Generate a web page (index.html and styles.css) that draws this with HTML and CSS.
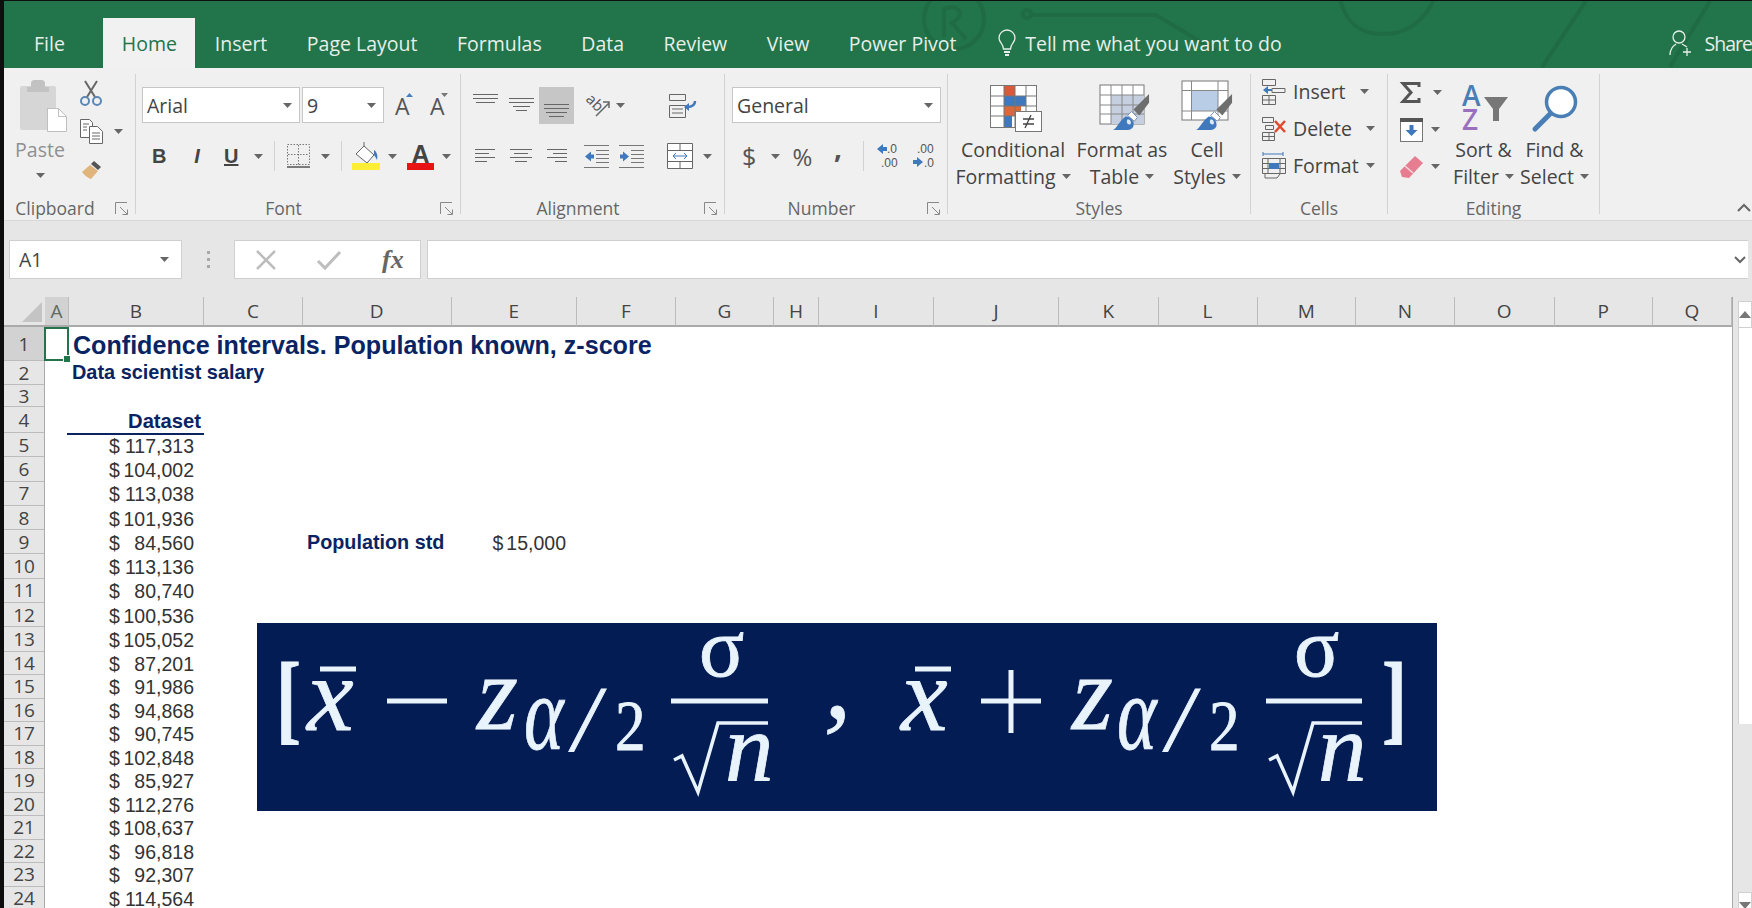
FILE: index.html
```html
<!DOCTYPE html>
<html>
	<head>
		<meta charset="UTF-8">
		<title>Confidence intervals</title>
		<link rel="stylesheet" href="styles.css">
	</head>
	<body>
		<svg class="defs" width="0" height="0">
			<symbol id="caret" viewBox="0 0 9 5"><path d="M0 0h9L4.500 5z" fill="#666"/></symbol>
			<symbol id="launch" viewBox="0 0 13 13"><path d="M.5 12V.5H12M5 5l7 7M7.500 12.500h5v-5" fill="none" stroke="#888"/></symbol>
			<symbol id="brush" viewBox="0 0 40 40"><path d="M38 1v9L28 23l-6-6z" fill="#6e6e6e"/><path d="M20 19l6 6-3 4-7-6z" fill="#fff" stroke="#7b8fb5"/><path d="M14 24c5 0 9 5 8 10-1 3-4 4-8 4H1c4-2 7-10 13-14z" fill="#3f78bd"/><path d="M16 27c3 0 4 3 3 5-3 1-5-2-3-5z" fill="#dfe9f5"/></symbol>
		</svg>
		<div class="app">
			<div class="tabs">
				<svg class="tabs-art" width="1748" height="67" viewBox="0 0 1748 67" fill="none" stroke="#1f6c44" stroke-width="4">
					<circle cx="950" cy="18" r="30"/>
					<path d="M940 36V8c12-6 24 4 8 14l14 16"/>
					<circle cx="1023" cy="13" r="4"/>
					<path d="M1027 14h125l60 36"/>
					<path d="M1336-2c6 26 22 35 44 35s40-12 50-35"/>
					<path d="M1538 66l44-66M1666 66l40-66"/>
				</svg>
				<div class="tab tab-file">File</div>
				<div class="tab tab-active">Home</div>
				<div class="tab">Insert</div>
				<div class="tab">Page Layout</div>
				<div class="tab">Formulas</div>
				<div class="tab">Data</div>
				<div class="tab">Review</div>
				<div class="tab">View</div>
				<div class="tab">Power Pivot</div>
				<div class="tell">
					<svg width="18" height="26" viewBox="0 0 18 26" fill="none" stroke="#e6efe9" stroke-width="1.300"><path d="M5.500 19c0-5-4.500-6.500-4.500-11a8 8 0 0 1 16 0c0 4.500-4.500 6-4.500 11z"/><path d="M6 22h6M7 25h4" stroke-width="2"/></svg>
					<span>Tell me what you want to do</span>
				</div>
				<div class="share">
					<svg width="24" height="26" viewBox="0 0 24 26" fill="none" stroke="#e6efe9" stroke-width="1.300"><circle cx="10" cy="7" r="6"/><path d="M1 25c0-6 3-9 6-11M13 14l5 3M18 18v8M14 22h8"/></svg>
					<span>Share</span>
				</div>
			</div>

			<div class="ribbon">
				<div class="group g-clip">
					<div class="body row-body">
						<div class="big paste">
							<div class="big-icon">
								<svg width="47" height="52" viewBox="0 0 47 52"><rect x="0" y="6" width="36" height="44" rx="2" fill="#d6d6d6"/><path d="M11 7V3c0-2 2-3 3-3h8c1 0 3 1 3 3v4h4v5H7V7z" fill="#c2c2c2"/><path d="M27.500 28.500h11l8 8v15h-19z" fill="#fff" stroke="#bfbfbf"/><path d="M38.500 28.500v8h8" fill="none" stroke="#bfbfbf"/></svg>
							</div>
							<div class="big-text muted">Paste</div>
							<svg class="paste-caret" width="9" height="5"><use href="#caret"/></svg>
						</div>
						<div class="clip-small">
							<div class="clip-row">
								<svg width="22" height="25" viewBox="0 0 22 25" fill="none"><path d="M5 0l10 16M17 0L7 16" stroke="#666" stroke-width="2"/><circle cx="5" cy="20" r="4" stroke="#5c87b5" stroke-width="2"/><circle cx="17" cy="20" r="4" stroke="#5c87b5" stroke-width="2"/></svg>
							</div>
							<div class="clip-row">
								<svg width="23" height="25" viewBox="0 0 23 25" fill="#fff" stroke="#666"><path d="M.5.500h9l3 3v15H.5z"/><path d="M9.500 7.500h8l5 5v12h-13z"/><path d="M3 5h6M3 8h4M3 11h4M12 14h8M12 17h8M12 20h8" fill="none"/></svg>
								<svg class="m11" width="9" height="5"><use href="#caret"/></svg>
							</div>
							<div class="clip-row">
								<svg width="23" height="20" viewBox="0 0 23 20"><path d="M14 2l7 6-3 3-7-6z" fill="#555"/><path d="M10 6l8 6-7 8c-3-1-7-4-9-7z" fill="#e0b57b"/></svg>
							</div>
						</div>
					</div>
					<div class="label"><span>Clipboard</span><svg class="launch" width="13" height="13"><use href="#launch"/></svg></div>
				</div>

				<div class="group g-font">
					<div class="body">
						<div class="ctl-row">
							<div class="combo combo-font m6"><span>Arial</span><svg width="9" height="5"><use href="#caret"/></svg></div>
							<div class="combo combo-size m2"><span>9</span><svg width="9" height="5"><use href="#caret"/></svg></div>
							<svg class="m11" width="19" height="32" viewBox="0 0 19 32"><text class="ic-a" x="0" y="26">A</text><path d="M11 8h7l-3.500-4z" fill="#4a7fb5"/></svg>
							<svg class="m16" width="19" height="32" viewBox="0 0 19 32"><text class="ic-a" x="0" y="26">A</text><path d="M11 4h7l-3.500 4z" fill="#777"/></svg>
						</div>
						<div class="ctl-row row-2">
							<span class="b-btn m16">B</span>
							<span class="i-btn m25">I</span>
							<span class="u-btn m21">U</span>
							<svg class="m16" width="9" height="5"><use href="#caret"/></svg>
							<i class="vline m11"></i>
							<svg class="m12" width="23" height="24" viewBox="0 0 23 24" fill="none" stroke="#777" stroke-dasharray="1.500 1.500"><path d="M.5.500h22v20H.5zM11.500 1v20M1 10.500h21"/><path d="M0 23h23" stroke="#555" stroke-width="1.500" stroke-dasharray="none"/></svg>
							<svg class="m11" width="9" height="5"><use href="#caret"/></svg>
							<i class="vline m11"></i>
							<svg class="m10" width="28" height="28" viewBox="0 0 28 28"><path d="M4 12L12 4l10 9-7 8z" fill="#fff" stroke="#666"/><path d="M12 5V0" stroke="#666"/><path d="M22 8c3 2 4 6 3 10-1-2-2-4-3-5z" fill="#3f78bd"/><rect y="21" width="28" height="7" fill="#ffee33"/></svg>
							<svg class="m8" width="9" height="5"><use href="#caret"/></svg>
							<svg class="m10" width="27" height="27" viewBox="0 0 27 27"><text class="ic-color" x="4.500" y="20">A</text><rect y="20" width="27" height="7" fill="#e81313"/></svg>
							<svg class="m8" width="9" height="5"><use href="#caret"/></svg>
						</div>
					</div>
					<div class="label"><span>Font</span><svg class="launch" width="13" height="13"><use href="#launch"/></svg></div>
				</div>

				<div class="group g-align">
					<div class="body">
						<div class="ctl-row">
							<svg class="m12 up14" width="25" height="9" viewBox="0 0 25 9" stroke="#666"><path d="M0 .5h25M0 4.500h25M3 8.500h19"/></svg>
							<svg class="m11" width="25" height="14" viewBox="0 0 25 14" stroke="#666"><path d="M0 .5h25M0 4.500h25M4 8.500h17M7 12.500h11"/></svg>
							<div class="hot m5">
								<svg width="25" height="14" viewBox="0 0 25 14" stroke="#666"><path d="M0 .5h25M0 4.500h25M2 8.500h21M5 12.500h15"/></svg>
							</div>
							<svg class="m9" width="27" height="23" viewBox="0 0 27 23"><text class="ic-orient" transform="translate(2 6) rotate(45)">ab</text><path d="M13 22L26 9M20 8h6v6" fill="none" stroke="#666" stroke-width="1.500"/></svg>
							<svg class="m6" width="9" height="5"><use href="#caret"/></svg>
							<svg class="m44" width="27" height="25" viewBox="0 0 27 25" fill="none" stroke="#666"><path d="M.5 1.500h16v6H.5zM.5 12.500h16v12H.5zM3 16h11M3 20h11"/><path d="M26 8c0 4-3 6-8 6" stroke="#3f78bd" stroke-width="2.500"/><path d="M20 10l-5 4 5 4z" fill="#3f78bd" stroke="none"/></svg>
						</div>
						<div class="ctl-row row-2">
							<svg class="m14" width="20" height="14" viewBox="0 0 20 14" stroke="#666"><path d="M0 .5h20M0 4.500h14M0 8.500h20M0 12.500h12"/></svg>
							<svg class="m15" width="22" height="14" viewBox="0 0 22 14" stroke="#666"><path d="M0 .5h22M4 4.500h14M0 8.500h22M5 12.500h12"/></svg>
							<svg class="m15" width="20" height="14" viewBox="0 0 20 14" stroke="#666"><path d="M0 .5h20M6 4.500h14M0 8.500h20M8 12.500h12"/></svg>
							<svg class="m17" width="25" height="23" viewBox="0 0 25 23" fill="none" stroke="#777"><path d="M0 .5h25M12 5.500h13M12 9.500h13M12 13.500h13M12 17.500h13M0 22.500h25"/><path d="M1 11.500l6-5v3h3v4H7v3z" fill="#3f78bd" stroke="none"/></svg>
							<svg class="m10" width="25" height="23" viewBox="0 0 25 23" fill="none" stroke="#777"><path d="M0 .5h25M12 5.500h13M12 9.500h13M12 13.500h13M12 17.500h13M0 22.500h25"/><path d="M10 11.500l-6-5v3H1v4h3v3z" fill="#3f78bd" stroke="none"/></svg>
							<svg class="m23" width="26" height="26" viewBox="0 0 26 26" fill="#fff" stroke="#666"><path d="M.5.500h25v25H.5zM1 7.500h24M1 18.500h24M13 1v6M13 19v6"/><path d="M6 13h14M9 10l-3 3 3 3M17 10l3 3-3 3" fill="none" stroke="#3f78bd"/></svg>
							<svg class="m10" width="9" height="5"><use href="#caret"/></svg>
						</div>
					</div>
					<div class="label"><span>Alignment</span><svg class="launch" width="13" height="13"><use href="#launch"/></svg></div>
				</div>

				<div class="group g-number">
					<div class="body">
						<div class="ctl-row">
							<div class="combo combo-num m7"><span>General</span><svg width="9" height="5"><use href="#caret"/></svg></div>
						</div>
						<div class="ctl-row row-2">
							<span class="sym sym-dollar m17">$</span>
							<svg class="m15" width="9" height="5"><use href="#caret"/></svg>
							<span class="sym sym-pct m12">%</span>
							<span class="sym sym-comma m21">,</span>
							<i class="vline m21"></i>
							<svg class="m13" width="21" height="28" viewBox="0 0 21 28"><text class="ic-dec" x="10" y="11">.0</text><text class="ic-dec" x="4" y="25">.00</text><path d="M0 7l6-5v3h4v4H6v3z" fill="#3f78bd"/></svg>
							<svg class="m15" width="21" height="28" viewBox="0 0 21 28"><text class="ic-dec" x="4" y="11">.00</text><text class="ic-dec" x="11" y="25">.0</text><path d="M10 20l-6-5v3H0v4h4v3z" fill="#3f78bd"/></svg>
						</div>
					</div>
					<div class="label"><span>Number</span><svg class="launch" width="13" height="13"><use href="#launch"/></svg></div>
				</div>

				<div class="group g-styles">
					<div class="body row-body">
						<div class="big w-cf">
							<div class="big-icon nudge">
								<svg width="52" height="47" viewBox="0 0 52 47"><rect x=".5" y=".5" width="46" height="42" fill="#fff" stroke="#777"/><rect x="14" y="1" width="11" height="10" fill="#d9593a"/><rect x="14" y="11" width="22" height="10" fill="#3f78bd"/><rect x="14" y="21" width="17" height="10" fill="#d9693a"/><rect x="14" y="31" width="8" height="11" fill="#3f78bd"/><path d="M1 11h46M1 21h46M1 31h46M14 1v42M25 1v42M36 1v42" stroke="#777" fill="none"/><rect x="25.500" y="26.500" width="26" height="20" fill="#fff" stroke="#777"/><path d="M33 34h11M33 39h11M41 30l-6 13" stroke="#444" stroke-width="1.300"/></svg>
							</div>
							<div class="big-text">Conditional</div>
							<div class="big-text">Formatting<svg class="m6" width="9" height="5"><use href="#caret"/></svg></div>
						</div>
						<div class="big w-ft">
							<div class="big-icon nudge">
								<svg width="52" height="48" viewBox="0 0 52 48"><rect x="1" y="1" width="44" height="39" fill="#fff" stroke="#777"/><rect x="12" y="11" width="33" height="29" fill="#c6cfe0"/><path d="M1 11h44M1 21h44M1 30h44M12 1v39M23 1v39M34 1v39" stroke="#888" fill="none"/><use href="#brush" x="13" y="9" width="39" height="39"/></svg>
							</div>
							<div class="big-text">Format as</div>
							<div class="big-text">Table<svg class="m6" width="9" height="5"><use href="#caret"/></svg></div>
						</div>
						<div class="big w-cs">
							<div class="big-icon">
								<svg width="53" height="52" viewBox="0 0 53 52"><rect x="1" y="1" width="46" height="39" fill="#fff" stroke="#777"/><rect x="11" y="11" width="26" height="20" fill="#b9cde6"/><path d="M1 10.500h46M1 31h46M10.500 1v39M37 1v39" stroke="#888" fill="none"/><use href="#brush" x="14" y="13" width="39" height="39"/></svg>
							</div>
							<div class="big-text">Cell</div>
							<div class="big-text">Styles<svg class="m6" width="9" height="5"><use href="#caret"/></svg></div>
						</div>
					</div>
					<div class="label center"><span>Styles</span></div>
				</div>

				<div class="group g-cells">
					<div class="body">
						<div class="cell-row">
							<svg width="24" height="26" viewBox="0 0 24 26" fill="none" stroke="#666"><path d="M.5.500h13v6H.5zM.5 16.500h13v9H.5zM7 17v8M1 21h12M10 9.500h13v4H10z"/><path d="M1 11l5-4v3h4v2H6v3z" fill="#3f78bd" stroke="none"/></svg>
							<span>Insert</span>
							<svg class="m14" width="9" height="5"><use href="#caret"/></svg>
						</div>
						<div class="cell-row">
							<svg width="24" height="24" viewBox="0 0 24 24" fill="none" stroke="#666"><path d="M.5.500h11v5H.5zM3.500 8.500h8v4h-8zM.5 15.500h12v8H.5zM7 16v7M1 19.500h11"/><path d="M13 4l10 11M23 4L13 15" stroke="#e0492c" stroke-width="2.500"/></svg>
							<span>Delete</span>
							<svg class="m14" width="9" height="5"><use href="#caret"/></svg>
						</div>
						<div class="cell-row">
							<svg width="24" height="27" viewBox="0 0 24 27" fill="none" stroke="#666"><path d="M1 2h20M1 0v4M21 0v4" stroke="#3f78bd"/><path d="M.5 6.500h23v15H.5zM6 7v14M18 7v14M1 11.500h22M1 16.500h22M3 22v4h12l3-4"/><rect x="7" y="11" width="10" height="6" fill="#3f78bd" stroke="none"/></svg>
							<span>Format</span>
							<svg class="m7" width="9" height="5"><use href="#caret"/></svg>
						</div>
					</div>
					<div class="label center"><span>Cells</span></div>
				</div>

				<div class="group g-edit">
					<div class="body row-body">
						<div class="edit-small">
							<div class="edit-row">
								<svg width="20" height="21" viewBox="0 0 20 21"><path d="M19 5V1.500H3l8 9-8 9h16V16" fill="none" stroke="#555" stroke-width="3"/></svg>
								<svg class="m13" width="9" height="5"><use href="#caret"/></svg>
							</div>
							<div class="edit-row">
								<svg width="23" height="24" viewBox="0 0 23 24"><rect x=".5" y=".5" width="22" height="23" fill="#fff" stroke="#777"/><rect width="23" height="4" fill="#555"/><path d="M11.500 18l-6-6h4V7h4v5h4z" fill="#3f78bd"/></svg>
								<svg class="m8" width="9" height="5"><use href="#caret"/></svg>
							</div>
							<div class="edit-row">
								<svg width="23" height="22" viewBox="0 0 23 22"><path d="M15 0l8 7-14 15-7-1-2-6z" fill="#e67d90"/><path d="M5 10l8 7" stroke="#f5d9de" stroke-width="1.500"/></svg>
								<svg class="m8" width="9" height="5"><use href="#caret"/></svg>
							</div>
						</div>
						<div class="big w-sort">
							<div class="big-icon">
								<svg width="50" height="47" viewBox="0 0 50 47"><text class="ic-az az-a" x="3" y="21">A</text><text class="ic-az az-z" x="3" y="45">Z</text><path d="M28 12h24L43 24v12h-6V24z" transform="translate(-3 0)" fill="#777"/></svg>
							</div>
							<div class="big-text">Sort &amp;</div>
							<div class="big-text">Filter<svg class="m6" width="9" height="5"><use href="#caret"/></svg></div>
						</div>
						<div class="big w-find">
							<div class="big-icon">
								<svg width="46" height="47" viewBox="0 0 46 47"><circle cx="29" cy="17" r="14.500" fill="#fff" stroke="#4a7fb5" stroke-width="3.500"/><path d="M18 29L3 44" stroke="#4a7fb5" stroke-width="5" stroke-linecap="round"/></svg>
							</div>
							<div class="big-text">Find &amp;</div>
							<div class="big-text">Select<svg class="m6" width="9" height="5"><use href="#caret"/></svg></div>
						</div>
					</div>
					<div class="label center"><span>Editing</span></div>
				</div>

				<svg class="collapse" width="14" height="9" viewBox="0 0 14 9" fill="none" stroke="#666" stroke-width="2"><path d="M1 8l6-6 6 6"/></svg>
			</div>

			<div class="fbar">
				<div class="namebox"><span>A1</span><svg width="9" height="5"><use href="#caret"/></svg></div>
				<div class="fdots"><i></i><i></i><i></i></div>
				<div class="fbtns">
					<svg width="20" height="20" viewBox="0 0 20 20" stroke="#bdbdbd" stroke-width="2.500"><path d="M1 1l18 18M19 1L1 19"/></svg>
					<svg width="24" height="20" viewBox="0 0 24 20" fill="none" stroke="#bdbdbd" stroke-width="3"><path d="M1 11l7 7L23 2"/></svg>
					<span class="fx">fx</span>
				</div>
				<div class="finput">
					<svg width="12" height="8" viewBox="0 0 12 8" fill="none" stroke="#666" stroke-width="2"><path d="M1 1l5 5 5-5"/></svg>
				</div>
			</div>

			<div class="sheet">
				<div class="grid">
					<div class="corner"><svg width="20" height="20" viewBox="0 0 20 20"><path d="M20 0v20H0z" fill="#c4c4c4"/></svg></div>
					<div class="ch ch-on">A</div><div class="ch">B</div><div class="ch">C</div><div class="ch">D</div><div class="ch">E</div><div class="ch">F</div><div class="ch">G</div><div class="ch">H</div><div class="ch">I</div><div class="ch">J</div><div class="ch">K</div><div class="ch">L</div><div class="ch">M</div><div class="ch">N</div><div class="ch">O</div><div class="ch">P</div><div class="ch">Q</div>

					<div class="rh rh-on">1</div><div class="a1"></div><div class="title">Confidence intervals. Population known, z-score</div>
					<div class="rh">2</div><div class="subtitle">Data scientist salary</div>
					<div class="rh">3</div>
					<div class="rh">4</div><div class="dataset">Dataset</div>
					<div class="rh">5</div><div class="money"><span>$</span><span>117,313</span></div>
					<div class="rh">6</div><div class="money"><span>$</span><span>104,002</span></div>
					<div class="rh">7</div><div class="money"><span>$</span><span>113,038</span></div>
					<div class="rh">8</div><div class="money"><span>$</span><span>101,936</span></div>
					<div class="rh">9</div><div class="money"><span>$</span><span>84,560</span></div><div class="std">Population std</div><div class="std-val"><span>$</span><span>15,000</span></div>
					<div class="rh">10</div><div class="money"><span>$</span><span>113,136</span></div>
					<div class="rh">11</div><div class="money"><span>$</span><span>80,740</span></div>
					<div class="rh">12</div><div class="money"><span>$</span><span>100,536</span></div>
					<div class="rh">13</div><div class="money"><span>$</span><span>105,052</span></div>
					<div class="rh">14</div><div class="money"><span>$</span><span>87,201</span></div>
					<div class="rh">15</div><div class="money"><span>$</span><span>91,986</span></div>
					<div class="rh">16</div><div class="money"><span>$</span><span>94,868</span></div>
					<div class="rh">17</div><div class="money"><span>$</span><span>90,745</span></div>
					<div class="rh">18</div><div class="money"><span>$</span><span>102,848</span></div>
					<div class="rh">19</div><div class="money"><span>$</span><span>85,927</span></div>
					<div class="rh">20</div><div class="money"><span>$</span><span>112,276</span></div>
					<div class="rh">21</div><div class="money"><span>$</span><span>108,637</span></div>
					<div class="rh">22</div><div class="money"><span>$</span><span>96,818</span></div>
					<div class="rh">23</div><div class="money"><span>$</span><span>92,307</span></div>
					<div class="rh">24</div><div class="money"><span>$</span><span>114,564</span></div>

					<svg class="picture" width="1180" height="188" viewBox="0 0 1180 188">
						<text class="fm fm-br" transform="translate(19 108) scale(.75 1)">[</text>
						<text class="fm fm-it" x="50" y="107">x</text>
						<path class="fm-line" d="M63 46h36"/>
						<path class="fm-line" d="M130 78h60"/>
						<text class="fm fm-it" x="220" y="106">z</text>
						<text class="fm fm-it" transform="translate(267 126) scale(.72 1)">α</text>
						<text class="fm fm-sl" x="316" y="127">/</text>
						<text class="fm fm-2" transform="translate(358 127) scale(.85 1)">2</text>
						<path class="fm-line" d="M414 78h97"/>
						<text class="fm fm-sig" x="442" y="53">σ</text>
						<path class="fm-rad" d="M417 137l8-4 16 36 20-69h50"/>
						<text class="fm fm-n" x="468" y="157">n</text>
						<text class="fm fm-cm" x="567" y="94">,</text>
						<text class="fm fm-it" x="644" y="107">x</text>
						<path class="fm-line" d="M658 46h36"/>
						<path class="fm-line" d="M724 78h60M754 47v63"/>
						<text class="fm fm-it" x="815" y="106">z</text>
						<text class="fm fm-it" transform="translate(860 126) scale(.72 1)">α</text>
						<text class="fm fm-sl" x="910" y="127">/</text>
						<text class="fm fm-2" transform="translate(952 127) scale(.85 1)">2</text>
						<path class="fm-line" d="M1009 78h96"/>
						<text class="fm fm-sig" x="1037" y="53">σ</text>
						<path class="fm-rad" d="M1012 137l8-4 16 36 20-69h49"/>
						<text class="fm fm-n" x="1061" y="157">n</text>
						<text class="fm fm-br" transform="translate(1125 108) scale(.75 1)">]</text>
					</svg>
				</div>
				<div class="vscroll">
					<div class="sb-btn"><svg width="12" height="7" viewBox="0 0 12 7"><path d="M0 7h12L6 0z" fill="#777"/></svg></div>
					<div class="sb-thumb"></div>
					<div class="sb-track"></div>
					<div class="sb-btn"><svg width="12" height="7" viewBox="0 0 12 7"><path d="M0 0h12L6 7z" fill="#777"/></svg></div>
				</div>
			</div>
		</div>
	</body>
</html>
```
FILE: styles.css
```css
html, body{
	margin: 0;
	height: 100%;
	overflow: hidden;
	background: #0e0e0e;
}
body{
	padding: 1px 0 0 4px;
	box-sizing: border-box;
	font-family: "Open Sans", "Noto Sans", sans-serif;
	color: #444;
}
.defs{
	position: absolute;
}
svg{
	flex: none;
	display: block;
	overflow: visible;
}
.app{
	width: 1748px;
	height: 907px;
	overflow: hidden;
}

/* tabs */
.tabs{
	height: 67px;
	background: #22744a;
	display: flex;
	align-items: flex-end;
	position: relative;
	color: #e6efe9;
	font-size: 19.500px;
	overflow: hidden;
}
.tabs-art{
	position: absolute;
	left: 0;
	top: 0;
}
.tab{
	height: 50px;
	line-height: 52px;
	padding: 0 19.750px;
	position: relative;
	white-space: nowrap;
}
.tab-file{
	padding: 0 19px 0 30px;
}
.tab-active{
	background: #f1f1f1;
	color: #22744a;
	padding: 0 18px 0 19px;
	margin-left: 19px;
}
.tell{
	height: 50px;
	display: flex;
	align-items: center;
	gap: 9px;
	margin-left: 22px;
	position: relative;
	white-space: nowrap;
}
.share{
	height: 50px;
	display: flex;
	align-items: center;
	gap: 12px;
	margin-left: auto;
	margin-right: 0;
	letter-spacing: -1px;
	position: relative;
}

/* ribbon */
.ribbon{
	height: 153px;
	box-sizing: border-box;
	background: #f0f0f0;
	border-bottom: 1px solid #d8d8d8;
	padding-top: 6px;
	display: flex;
	font-size: 19.500px;
}
.group{
	height: 140px;
	box-sizing: border-box;
	border-right: 1px solid #d2d2d2;
	flex: none;
	display: flex;
	flex-direction: column;
}
.g-clip{ width: 132px; }
.g-font{ width: 325px; }
.g-align{ width: 264px; }
.g-number{ width: 223px; }
.g-styles{ width: 303px; }
.g-cells{ width: 137px; }
.g-edit{ width: 212px; }
.body{
	height: 122px;
}
.row-body{
	display: flex;
}
.label{
	display: flex;
	height: 18px;
	color: #666;
	font-size: 17.500px;
	line-height: 25px;
	align-items: flex-start;
}
.label span{
	flex: 1;
	text-align: center;
}
.launch{
	margin: 6px 7px 0 9px;
}
.big{
	flex: none;
	display: flex;
	flex-direction: column;
	align-items: center;
}
.big-icon{
	height: 58px;
	display: flex;
	align-items: flex-end;
	margin-bottom: 4px;
}
.nudge{
	margin-left: 6px;
}
.big-text{
	height: 27px;
	line-height: 27px;
	display: flex;
	align-items: center;
	white-space: nowrap;
}
.muted{
	color: #8f8f8f;
}
.paste{
	width: 72px;
}
.paste .big-icon{
	margin-left: 7px;
}
.paste-caret{
	margin-top: 10px;
}
.clip-small{
	margin-left: 4px;
}
.clip-row{
	height: 38px;
	display: flex;
	align-items: center;
}
.ctl-row{
	display: flex;
	align-items: center;
	height: 38px;
	margin-top: 12px;
}
.row-2{
	height: 32px;
	margin-top: 16px;
}
.combo{
	height: 36px;
	box-sizing: border-box;
	background: #fff;
	border: 1px solid #c6c6c6;
	display: flex;
	align-items: center;
	justify-content: space-between;
	padding: 0 7px 0 4px;
}
.combo-font{ width: 158px; }
.combo-size{ width: 82px; }
.combo-num{ width: 209px; }
.combo span{
	color: #444;
}
.hot{
	width: 35px;
	height: 37px;
	background: #c6c6c6;
	display: flex;
	justify-content: center;
	align-items: flex-end;
	box-sizing: border-box;
	padding-bottom: 6px;
}
.up14{
	margin-bottom: 14px;
}
.vline{
	width: 1px;
	height: 30px;
	background: #d2d2d2;
	flex: none;
}
.m2{ margin-left: 2px; }
.m5{ margin-left: 5px; }
.m6{ margin-left: 6px; }
.m7{ margin-left: 7px; }
.m8{ margin-left: 8px; }
.m9{ margin-left: 9px; }
.m10{ margin-left: 10px; }
.m11{ margin-left: 11px; }
.m12{ margin-left: 12px; }
.m13{ margin-left: 13px; }
.m14{ margin-left: 14px; }
.m15{ margin-left: 15px; }
.m16{ margin-left: 16px; }
.m17{ margin-left: 17px; }
.m21{ margin-left: 21px; }
.m23{ margin-left: 23px; }
.m25{ margin-left: 25px; }
.m44{ margin-left: 44px; }
.b-btn, .i-btn, .u-btn{
	font-family: "Liberation Sans", sans-serif;
	font-size: 20px;
	font-weight: bold;
	width: 14px;
	flex: none;
	text-align: center;
}
.i-btn{
	font-style: italic;
	width: 12px;
}
.u-btn{
	text-decoration: underline;
}
.sym{
	flex: none;
	text-align: center;
	color: #555;
}
.sym-dollar{
	width: 14px;
	font-size: 25px;
}
.sym-pct{
	width: 21px;
	font-size: 24px;
}
.sym-comma{
	width: 8px;
	font-size: 28px;
	font-weight: bold;
	line-height: 20px;
	margin-bottom: 18px;
}
.ic-a{
	font-family: "Open Sans", sans-serif;
	font-size: 23px;
	fill: #555;
}
.ic-color{
	font-family: "Liberation Sans", sans-serif;
	font-size: 25px;
	font-weight: bold;
	fill: #444;
}
.ic-orient{
	font-family: "Open Sans", sans-serif;
	font-size: 15px;
	fill: #555;
}
.ic-dec{
	font-family: "Liberation Sans", sans-serif;
	font-size: 12px;
	fill: #555;
}
.ic-az{
	font-family: "Open Sans", sans-serif;
	font-size: 28px;
	font-weight: 600;
}
.az-a{ fill: #4a7fb5; }
.az-z{ fill: #9a70bd; }

/* styles, cells, editing */
.g-styles .row-body{
	padding-left: 4px;
}
.w-cf{ width: 122px; }
.w-ft{ width: 96px; }
.w-cs{ width: 74px; }
.g-cells .body{
	padding-left: 11px;
	height: 123px;
	margin-top: -1px;
}
.cell-row{
	height: 37px;
	display: flex;
	align-items: center;
}
.cell-row span{
	margin-left: 7px;
}
.edit-small{
	width: 50px;
	padding-left: 12px;
	flex: none;
}
.edit-row{
	height: 37px;
	display: flex;
	align-items: center;
}
.w-sort{ width: 67px; }
.w-find{ width: 75px; }
.collapse{
	margin: 129px 1px 0 auto;
}

/* formula bar */
.fbar{
	height: 76px;
	box-sizing: border-box;
	background: #e6e6e6;
	padding: 19px 0 18px 5px;
	display: flex;
	font-size: 19.500px;
}
.namebox{
	width: 173px;
	box-sizing: border-box;
	background: #fff;
	border: 1px solid #cfcfcf;
	display: flex;
	align-items: center;
	justify-content: space-between;
	padding: 0 12px 0 9px;
}
.fdots{
	width: 52px;
	display: flex;
	flex-direction: column;
	align-items: center;
	justify-content: center;
	gap: 4px;
}
.fdots i{
	width: 3px;
	height: 3px;
	background: #a8a8a8;
}
.fbtns{
	width: 187px;
	box-sizing: border-box;
	background: #fff;
	border: 1px solid #cfcfcf;
	display: flex;
	align-items: center;
	padding-left: 21px;
	gap: 41px;
}
.fx{
	font-family: "Liberation Serif", serif;
	font-style: italic;
	font-weight: bold;
	font-size: 26px;
	color: #666;
}
.finput{
	width: 1321px;
	margin-left: 6px;
	box-sizing: border-box;
	background: #fff;
	border: 1px solid #cfcfcf;
	border-right: 0;
	display: flex;
	align-items: center;
	justify-content: flex-end;
	padding-right: 2px;
}

/* sheet */
.sheet{
	height: 611px;
	display: flex;
	background: #fff;
}
.grid{
	width: 1728px;
	flex: none;
	display: grid;
	grid-template-columns: 41px 24px 135px 99px 148.500px 125.500px 99px 98px 45px 115px 125px 99.500px 99px 98.500px 99px 99.500px 98.500px 79px;
	grid-template-rows: 30px 34px 24px 22px 26px repeat(9, 24.300px) repeat(11, 23.500px);
	position: relative;
	overflow: hidden;
	font-family: "Liberation Sans", sans-serif;
}
.corner{
	background: #e6e6e6;
	border-bottom: 2px solid #aaa;
	box-sizing: border-box;
	display: flex;
	justify-content: flex-end;
	align-items: flex-end;
	padding: 0 3px 3px 0;
}
.ch{
	background: #e6e6e6;
	border-bottom: 2px solid #aaa;
	border-right: 1px solid #bcbcbc;
	box-sizing: border-box;
	text-align: center;
	font-family: "Open Sans", sans-serif;
	font-size: 19px;
	line-height: 29px;
}
.ch-on{
	background: #d2d2d2;
	color: #5f6b63;
}
.rh{
	grid-column: 1;
	background: #e6e6e6;
	border-bottom: 1px solid #bcbcbc;
	border-right: 1px solid #aaa;
	box-sizing: border-box;
	font-family: "Open Sans", sans-serif;
	font-size: 19px;
	display: flex;
	align-items: center;
	justify-content: center;
}
.rh-on{
	background: #d2d2d2;
}
.a1{
	grid-column: 2;
	border: 2px solid #22744a;
	margin-left: -1px;
	position: relative;
}
.a1::after{
	content: "";
	position: absolute;
	right: -4px;
	bottom: -4px;
	width: 6px;
	height: 6px;
	background: #22744a;
	border: 1px solid #fff;
}
.title{
	grid-column: 3;
	font-size: 25.100px;
	font-weight: bold;
	color: #0a2463;
	white-space: nowrap;
	padding-left: 4px;
	line-height: 36px;
}
.subtitle{
	grid-column: 3;
	font-size: 19.900px;
	font-weight: bold;
	color: #0a2463;
	white-space: nowrap;
	padding-left: 3px;
	line-height: 22px;
}
.dataset{
	grid-column: 3;
	font-size: 20.200px;
	font-weight: bold;
	color: #0a2463;
	text-align: right;
	padding-right: 3px;
	border-bottom: 2px solid #0a2463;
	margin: 0 0 -2px -2px;
	line-height: 28px;
}
.money, .std-val{
	grid-column: 3;
	display: flex;
	justify-content: space-between;
	align-items: center;
	padding: 2px 10px 0 40px;
	font-size: 19.500px;
	color: #333;
}
.std{
	grid-column: 5;
	font-size: 19.800px;
	font-weight: bold;
	color: #0a2463;
	padding-left: 4px;
	white-space: nowrap;
	line-height: 25px;
}
.std-val{
	grid-column: 6;
	padding: 2px 11px 0 41px;
}
.picture{
	position: absolute;
	left: 253px;
	top: 326px;
	background: #031c54;
}
.fm{
	fill: #e8f3fb;
	stroke: #e8f3fb;
	stroke-width: .8;
	font-family: "Liberation Serif", serif;
}
.fm-it{
	font-size: 105px;
	font-style: italic;
}
.fm-n{
	font-size: 97px;
	font-style: italic;
}
.fm-br{
	font-size: 100px;
	font-weight: bold;
}
.fm-cm{
	font-size: 110px;
	font-style: italic;
}
.fm-2{
	font-size: 72px;
}
.fm-sl{
	font-size: 94px;
	font-style: italic;
}
.fm-sig{
	font-size: 84px;
}
.fm-line{
	fill: none;
	stroke: #e8f3fb;
	stroke-width: 5;
}
.fm-rad{
	fill: none;
	stroke: #e8f3fb;
	stroke-width: 3.500;
}

/* scrollbar */
.vscroll{
	width: 20px;
	box-sizing: border-box;
	background: #e6e6e6;
	border-left: 1px solid #aaa;
	padding: 4px 0 0 5px;
	display: flex;
	flex-direction: column;
}
.sb-btn{
	height: 25px;
	flex: none;
	background: #fff;
	border: 1px solid #d0d0d0;
	display: flex;
	align-items: center;
	justify-content: center;
	overflow: hidden;
}
.sb-thumb{
	height: 396px;
	flex: none;
	background: #fff;
	border-left: 1px solid #d0d0d0;
}
.sb-track{
	flex: none;
	height: 168px;
}
```
